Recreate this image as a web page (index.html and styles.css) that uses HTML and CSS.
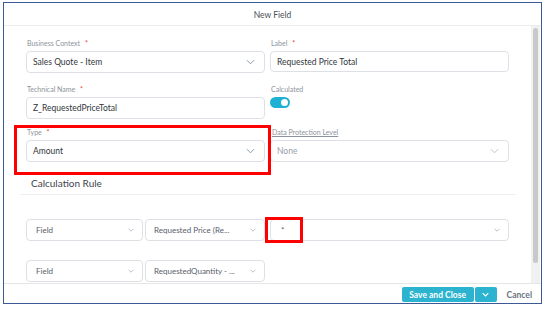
FILE: index.html
```html
<!DOCTYPE html>
<html>
<head>
<meta charset="utf-8">
<link rel="stylesheet" href="styles.css">
</head>
<body>
<div class="dialog">
  <div class="header">New Field</div>
  <div class="main">
    <div class="content">
      <div class="grid row1">
        <div class="item">
          <div class="label">Business Context <span class="req">*</span></div>
          <div class="field select"><span>Sales Quote - Item</span><svg class="chev" viewBox="0 0 10 6"><path d="M1 1l4 4 4-4"/></svg></div>
        </div>
        <div class="item">
          <div class="label">Label <span class="req">*</span></div>
          <div class="field short"><span>Requested Price Total</span></div>
        </div>
      </div>
      <div class="grid row2">
        <div class="item">
          <div class="label">Technical Name <span class="req">*</span></div>
          <div class="field"><span>Z_RequestedPriceTotal</span></div>
        </div>
        <div class="item">
          <div class="label">Calculated</div>
          <div class="toggle"><span class="knob"></span></div>
        </div>
      </div>
      <div class="grid row3">
        <div class="item">
          <div class="label">Type <span class="req">*</span></div>
          <div class="field select"><span>Amount</span><svg class="chev" viewBox="0 0 10 6"><path d="M1 1l4 4 4-4"/></svg></div>
        </div>
        <div class="item">
          <div class="label link">Data Protection Level</div>
          <div class="field select muted"><span>None</span><svg class="chev light" viewBox="0 0 10 6"><path d="M1 1l4 4 4-4"/></svg></div>
        </div>
      </div>
      <div class="section">Calculation Rule</div>
      <div class="rule r1">
        <div class="field select small w1"><span>Field</span><svg class="chev sm" viewBox="0 0 10 6"><path d="M1 1l4 4 4-4"/></svg></div>
        <div class="field select small w2"><span>Requested Price (Re...</span><svg class="chev sm" viewBox="0 0 10 6"><path d="M1 1l4 4 4-4"/></svg></div>
        <div class="field select small w3"><span class="op">*</span><svg class="chev sm" viewBox="0 0 10 6"><path d="M1 1l4 4 4-4"/></svg></div>
      </div>
      <div class="rule r2">
        <div class="field select small w1"><span>Field</span><svg class="chev sm" viewBox="0 0 10 6"><path d="M1 1l4 4 4-4"/></svg></div>
        <div class="field select small w2"><span>RequestedQuantity - ...</span><svg class="chev sm" viewBox="0 0 10 6"><path d="M1 1l4 4 4-4"/></svg></div>
      </div>
    </div>
    <div class="scroll"><div class="thumb"></div></div>
  </div>
  <div class="footer">
    <button class="btn primary">Save and Close</button>
    <button class="btn primary drop"><svg class="chev white" viewBox="0 0 10 6"><path d="M1 1l4 4 4-4"/></svg></button>
    <span class="cancel">Cancel</span>
  </div>
  <div class="mark mark1"></div>
  <div class="mark mark2"></div>
</div>
</body>
</html>
```
FILE: styles.css
```css
* { box-sizing: border-box; }
html, body { margin: 0; background: #fff; }
body { padding: 2px 0 0 3px; font-family: "Lato", "Liberation Sans", sans-serif; color: #32363a; }

.dialog {
  position: relative;
  width: 539px;
  height: 302px;
  border: 1px solid #3c5a96;
  display: flex;
  flex-direction: column;
  background: #fff;
}
.header {
  height: 23px;
  border-bottom: 1px solid #ececec;
  display: flex;
  align-items: center;
  justify-content: center;
  font-size: 8.5px;
  color: #4a4f57;
  padding-top: 1px;
}
.main {
  flex: 1;
  display: flex;
  overflow: hidden;
  min-height: 0;
}
.content {
  flex: 1;
  padding: 12px 0 0 22px;
  overflow: hidden;
}
.grid {
  display: grid;
  grid-template-columns: 239px 239px;
  column-gap: 5px;
}
.row2 { margin-top: 11px; }
.row3 { margin-top: 8px; }
.label {
  font-size: 7px;
  line-height: 10px;
  height: 10px;
  color: #8d939c;
  margin-bottom: 3px;
  padding-left: 1px;
}
.req { color: #e0403a; margin-left: 3px; }
.link { text-decoration: underline; padding-left: 2px; }
.field {
  height: 22px;
  border: 1px solid #dde1e6;
  border-radius: 4px;
  background: #fff;
  display: flex;
  align-items: center;
  justify-content: space-between;
  padding: 0 9px 0 6px;
  font-size: 8.5px;
  color: #32363a;
}
.field.short { height: 21px; }
.muted { color: #9aa0a8; }
.chev { width: 9px; height: 6px; fill: none; stroke: #7f8fa3; stroke-width: 1; }
.chev.light { stroke: #b5bcc5; }
.chev.sm { width: 6px; height: 4px; stroke: #8a95a3; }
.toggle {
  width: 20px;
  height: 11px;
  border-radius: 6px;
  background: #1db1d4;
  position: relative;
}
.knob {
  position: absolute;
  right: 2px;
  top: 2px;
  width: 7px;
  height: 7px;
  border-radius: 50%;
  background: #fff;
}
.section {
  margin: 15px 0 0 -6px;
  padding: 0 0 5px 11px;
  width: 496px;
  border-bottom: 1px solid #eceef0;
  font-size: 10px;
  color: #42464d;
  line-height: 12px;
}
.rule { display: flex; gap: 2px; }
.r1 { margin-top: 24px; }
.r2 { margin-top: 19px; }
.field.small { font-size: 8px; color: #5a606a; padding: 0 8px 0 9px; }
.w1 { width: 117px; }
.w2 { width: 120px; padding-left: 8px !important; }
.w3 { width: 239px; margin-left: 3px; }
.op { padding-left: 1px; }
.scroll {
  width: 9px;
  margin-right: 1px;
  background: #f1f1f1;
  padding: 2px 2px 20px 2px;
}
.thumb {
  height: 235px;
  border-radius: 3px;
  background: #c9c9c9;
}
.footer {
  height: 20px;
  border-top: 1px solid #e6e6e6;
  display: flex;
  align-items: center;
  justify-content: flex-end;
  padding: 2px 9px 0 0;
}
.btn {
  border: none;
  border-radius: 2px;
  background: #2bb3d0;
  color: #fff;
  font-family: inherit;
  font-weight: 700;
  font-size: 8.5px;
  height: 15px;
  padding: 0;
}
.primary { width: 72px; }
.drop { width: 22px; margin-left: 1px; display: flex; align-items: center; justify-content: center; }
.chev.white { stroke: #fff; stroke-width: 1.6; width: 7px; height: 5px; }
.cancel {
  margin-left: 10px;
  font-size: 8.5px;
  font-weight: 700;
  color: #6a7480;
}
.mark {
  position: absolute;
  border: 3px solid #ff0000;
}
.mark1 { left: 10px; top: 122px; width: 257px; height: 50px; }
.mark2 { left: 261px; top: 214px; width: 38px; height: 26px; }
```
